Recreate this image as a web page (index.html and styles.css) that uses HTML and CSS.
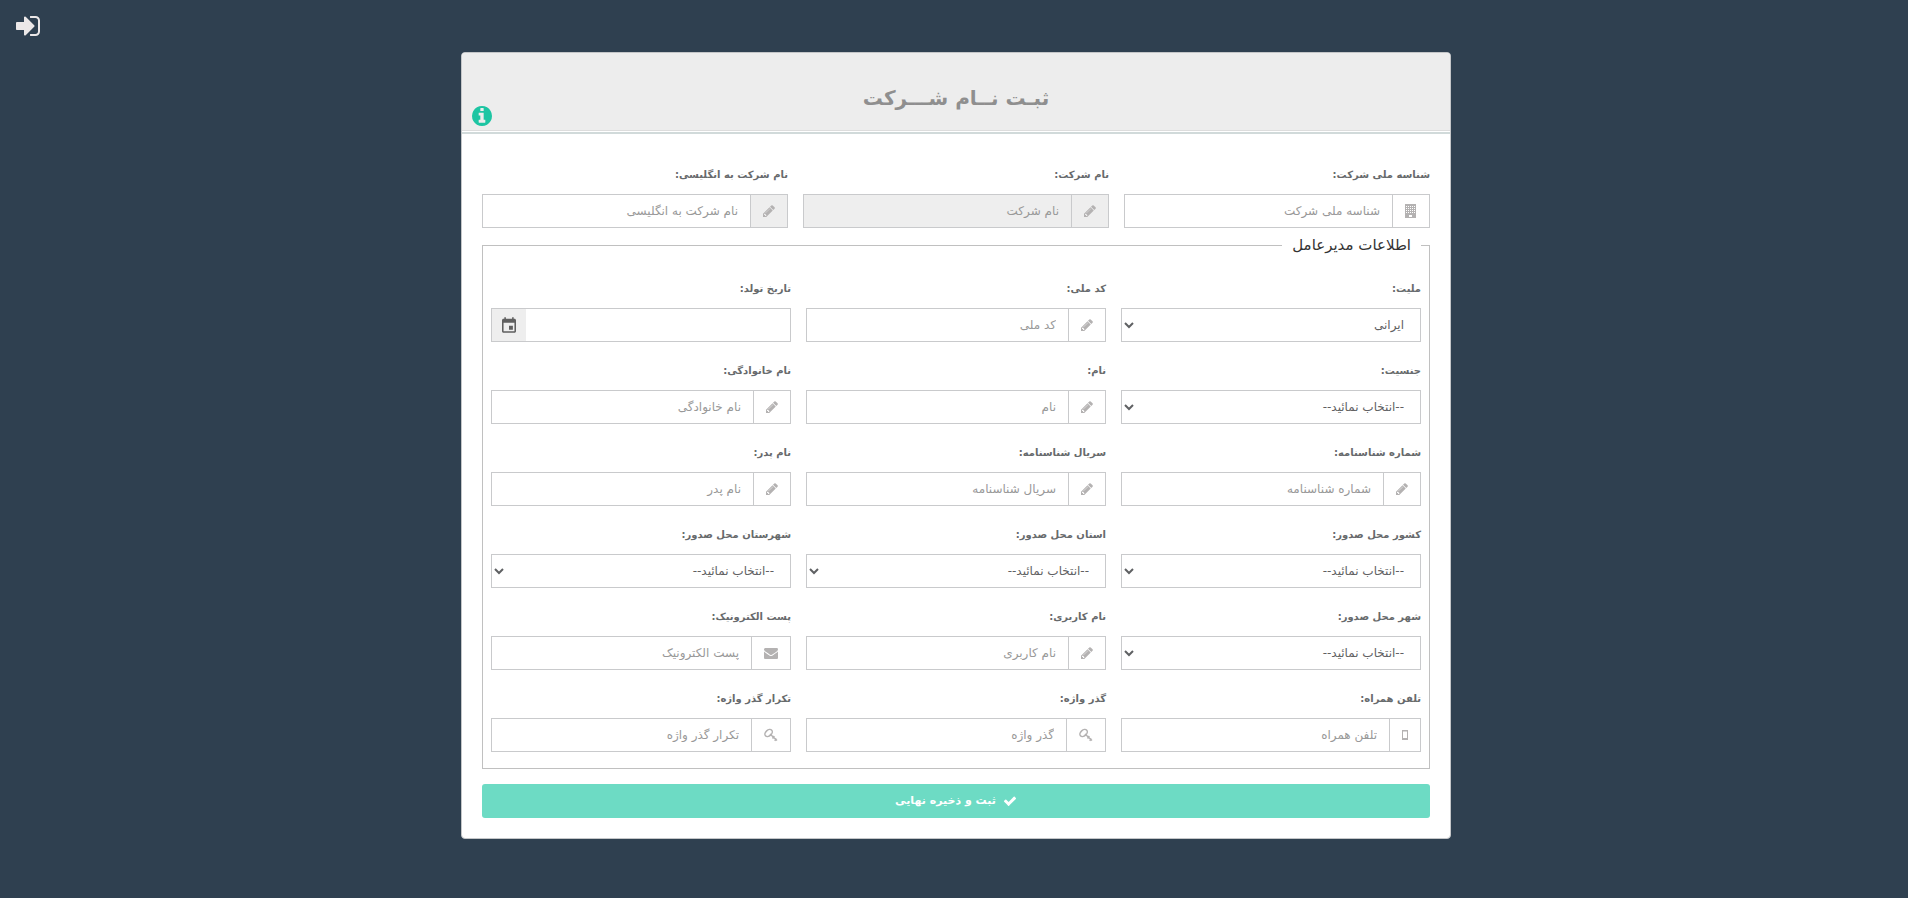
FILE: index.html
```
<!DOCTYPE html>
<html lang="fa" dir="rtl">
<head>
<meta charset="utf-8">
<title>ثبت نام شرکت</title>
<link rel="stylesheet" href="styles.css">
</head>
<body>
<svg class="sprite" aria-hidden="true">
  <symbol id="pencil" viewBox="128 128 1536 1536"><path d="M491 1536l91-91-235-235-91 91v107h128v128h107zm523-928q0-22-22-22-10 0-17 7l-542 542q-7 7-7 17 0 22 22 22 10 0 17-7l542-542q7-7 7-17zm-54-192l416 416-832 832h-416v-416zm683 96q0 53-37 90l-166 166-416-416 166-165q36-38 90-38 53 0 91 38l235 234q37 39 37 91z"/></symbol>
  <symbol id="building" viewBox="0 0 12 14"><path fill-rule="evenodd" d="M0 0h11v14H0zM1 2v1h1V2zm2 0v1h1V2zm2 0v1h1V2zm2 0v1h1V2zm2 0v1h1V2zM1 4v1h1V4zm2 0v1h1V4zm2 0v1h1V4zm2 0v1h1V4zm2 0v1h1V4zM1 6v1h1V6zm2 0v1h1V6zm2 0v1h1V6zm2 0v1h1V6zm2 0v1h1V6zM1 8v1h1V8zm2 0v1h1V8zm2 0v1h1V8zm2 0v1h1V8zm2 0v1h1V8zM4 11v2h3v-2z"/></symbol>
  <symbol id="envelope" viewBox="0 256 1792 1408"><path d="M1792 710v794q0 66-47 113t-113 47h-1472q-66 0-113-47t-47-113v-794q44 49 101 87 362 246 497 345 57 42 92.5 65.5t94.5 48 110 24.5h2q51 0 110-24.5t94.5-48 92.5-65.5q170-123 498-345 57-39 100-87zm0-294q0 79-49 151t-122 123q-376 261-468 325-10 7-42.5 31t-54 38.5-52 32.5-57.5 27-50 9h-2q-23 0-50-9t-57.5-27-52-32.5-54-38.5-42.5-31q-91-64-262-182.5t-205-142.5q-62-42-117-115.5t-55-136.5q0-78 41.5-130t118.5-52h1472q65 0 112.5 47t47.5 113z"/></symbol>
  <symbol id="key" viewBox="0 0 14 14"><g fill="none" stroke="currentColor" stroke-width="1.500"><ellipse cx="4.600" cy="5" rx="4.200" ry="2.900" transform="rotate(-42 4.600 5)"/><path d="M6 6l7 6.500M8.500 10.500L10.300 8M10.800 12.800L12.300 10.500"/></g></symbol>
  <symbol id="mobile" viewBox="0 0 6 10"><path fill-rule="evenodd" d="M0 0h6v10H0zM1 1.500v6.500h4V1.500z"/></symbol>
  <symbol id="calendar" viewBox="3 1 18 20"><path d="M17 12h-5v5h5v-5zM16 1v2H8V1H6v2H5c-1.110 0-1.990.9-1.990 2L3 19c0 1.100.89 2 2 2h14c1.100 0 2-.9 2-2V5c0-1.100-.9-2-2-2h-1V1h-2zm3 18H5V8h14v11z"/></symbol>
  <symbol id="check" viewBox="0 0 1792 1792"><path d="M1671 566q0 40-28 68l-724 724-136 136q-28 28-68 28t-68-28l-136-136-362-362q-28-28-28-68t28-68l136-136q28-28 68-28t68 28l294 295 656-657q28-28 68-28t68 28l136 136q28 28 28 68z"/></symbol>
  <symbol id="info" viewBox="128 128 1536 1536"><path d="M1152 1376v-160q0-14-9-23t-23-9h-96v-512q0-14-9-23t-23-9h-320q-14 0-23 9t-9 23v160q0 14 9 23t23 9h96v320h-96q-14 0-23 9t-9 23v160q0 14 9 23t23 9h448q14 0 23-9t9-23zm-128-896v-160q0-14-9-23t-23-9h-192q-14 0-23 9t-9 23v160q0 14 9 23t23 9h192q14 0 23-9t9-23zm640 416q0 209-103 385.500t-279.500 279.500-385.500 103-385.500-103-279.500-279.500-103-385.500 103-385.500 279.500-279.500 385.500-103 385.500 103 279.500 279.500 103 385.500z"/></symbol>
  <symbol id="signin" viewBox="128 256 1536 1280"><path d="M1312 896q0 26-19 45l-544 544q-19 19-45 19t-45-19-19-45v-288h-448q-26 0-45-19t-19-45v-384q0-26 19-45t45-19h448v-288q0-26 19-45t45-19 45 19l544 544q19 19 19 45zm352-352v704q0 119-84.500 203.500t-203.500 84.500h-320q-13 0-22.500-9.500t-9.500-22.500q0-4-1-20t-.5-26.500 3-23.500 10-19.500 20.500-6.500h320q66 0 113-47t47-113v-704q0-66-47-113t-113-47h-312l-11.500-1-11.500-3-8-5.500-7-9-2-13.500q0-4-1-20t-.5-26.500 3-23.500 10-19.500 20.500-6.500h320q119 0 203.500 84.500t84.500 203.500z"/></symbol>
</svg>

<header class="topbar">
  <a class="login-link" href="#" aria-label="ورود"><svg width="24" height="20"><use href="#signin"/></svg></a>
</header>

<main class="panel">
  <div class="panel-heading">
    <h1>ثبـت نــام شـــرکت</h1>
    <button class="info" type="button" aria-label="راهنما"><svg width="20" height="20"><use href="#info"/></svg></button>
  </div>
  <form class="panel-body">
    <div class="grid">
      <div class="field">
        <label for="cid">شناسه ملی شرکت:</label>
        <div class="group"><span class="addon"><svg width="12" height="14"><use href="#building"/></svg></span><input id="cid" type="text" placeholder="شناسه ملی شرکت"></div>
      </div>
      <div class="field">
        <label for="cname">نام شرکت:</label>
        <div class="group disabled"><span class="addon muted"><svg width="12" height="12"><use href="#pencil"/></svg></span><input id="cname" type="text" placeholder="نام شرکت" disabled></div>
      </div>
      <div class="field">
        <label for="cen">نام شرکت به انگلیسی:</label>
        <div class="group"><span class="addon muted"><svg width="12" height="12"><use href="#pencil"/></svg></span><input id="cen" type="text" placeholder="نام شرکت به انگلیسی"></div>
      </div>
    </div>

    <fieldset>
      <legend>اطلاعات مدیرعامل</legend>
      <div class="grid">
        <div class="field">
          <label for="nat">ملیت:</label>
          <select id="nat"><option>ایرانی</option></select>
        </div>
        <div class="field">
          <label for="nid">کد ملی:</label>
          <div class="group"><span class="addon"><svg width="12" height="12"><use href="#pencil"/></svg></span><input id="nid" type="text" placeholder="کد ملی"></div>
        </div>
        <div class="field">
          <label for="birth">تاریخ تولد:</label>
          <div class="group"><input id="birth" type="text"><button class="picker" type="button" aria-label="تقویم"><svg width="14" height="16"><use href="#calendar"/></svg></button></div>
        </div>

        <div class="field">
          <label for="gender">جنسیت:</label>
          <select id="gender"><option>--انتخاب نمائید--</option></select>
        </div>
        <div class="field">
          <label for="fname">نام:</label>
          <div class="group"><span class="addon"><svg width="12" height="12"><use href="#pencil"/></svg></span><input id="fname" type="text" placeholder="نام"></div>
        </div>
        <div class="field">
          <label for="lname">نام خانوادگی:</label>
          <div class="group"><span class="addon"><svg width="12" height="12"><use href="#pencil"/></svg></span><input id="lname" type="text" placeholder="نام خانوادگی"></div>
        </div>

        <div class="field">
          <label for="idno">شماره شناسنامه:</label>
          <div class="group"><span class="addon"><svg width="12" height="12"><use href="#pencil"/></svg></span><input id="idno" type="text" placeholder="شماره شناسنامه"></div>
        </div>
        <div class="field">
          <label for="idserial">سریال شناسنامه:</label>
          <div class="group"><span class="addon"><svg width="12" height="12"><use href="#pencil"/></svg></span><input id="idserial" type="text" placeholder="سریال شناسنامه"></div>
        </div>
        <div class="field">
          <label for="father">نام پدر:</label>
          <div class="group"><span class="addon"><svg width="12" height="12"><use href="#pencil"/></svg></span><input id="father" type="text" placeholder="نام پدر"></div>
        </div>

        <div class="field">
          <label for="country">کشور محل صدور:</label>
          <select id="country"><option>--انتخاب نمائید--</option></select>
        </div>
        <div class="field">
          <label for="province">استان محل صدور:</label>
          <select id="province"><option>--انتخاب نمائید--</option></select>
        </div>
        <div class="field">
          <label for="county">شهرستان محل صدور:</label>
          <select id="county"><option>--انتخاب نمائید--</option></select>
        </div>

        <div class="field">
          <label for="city">شهر محل صدور:</label>
          <select id="city"><option>--انتخاب نمائید--</option></select>
        </div>
        <div class="field">
          <label for="user">نام کاربری:</label>
          <div class="group"><span class="addon"><svg width="12" height="12"><use href="#pencil"/></svg></span><input id="user" type="text" placeholder="نام کاربری"></div>
        </div>
        <div class="field">
          <label for="email">پست الکترونیک:</label>
          <div class="group"><span class="addon"><svg width="14" height="11"><use href="#envelope"/></svg></span><input id="email" type="email" placeholder="پست الکترونیک"></div>
        </div>

        <div class="field">
          <label for="mobile-no">تلفن همراه:</label>
          <div class="group"><span class="addon phone"><svg width="6" height="10"><use href="#mobile"/></svg></span><input id="mobile-no" type="tel" placeholder="تلفن همراه"></div>
        </div>
        <div class="field">
          <label for="pass">گذر واژه:</label>
          <div class="group"><span class="addon"><svg width="14" height="14"><use href="#key"/></svg></span><input id="pass" type="password" placeholder="گذر واژه"></div>
        </div>
        <div class="field">
          <label for="pass2">تکرار گذر واژه:</label>
          <div class="group"><span class="addon"><svg width="14" height="14"><use href="#key"/></svg></span><input id="pass2" type="password" placeholder="تکرار گذر واژه"></div>
        </div>
      </div>
    </fieldset>

    <button class="submit" type="submit"><svg width="14" height="14"><use href="#check"/></svg>ثبت و ذخیره نهایی</button>
  </form>
</main>
</body>
</html>
```
FILE: styles.css
```
* { box-sizing: border-box; }

body {
  margin: 0;
  padding-left: 4px;
  background: #2f4050;
  color: #676a6c;
  font: 12px/18px "DejaVu Sans", sans-serif;
}

svg { display: block; fill: currentColor; }
.sprite { position: absolute; width: 0; height: 0; }

.topbar {
  display: flex;
  justify-content: flex-end;
  height: 52px;
  padding: 16px 12px;
}
.login-link { color: #ece8e8; }

.panel {
  max-width: 990px;
  margin: 0 auto 40px;
  border: 1px solid #c4c6c8;
  border-radius: 4px;
  background: #fff;
}

.panel-heading {
  position: relative;
  display: flex;
  align-items: center;
  justify-content: center;
  height: 78px;
  padding-top: 12px;
  border-bottom: 1px solid #ddd;
  border-radius: 3px 3px 0 0;
  background: #ededed;
}
.panel-heading h1 {
  margin: 0;
  color: #8f8f8f;
  font-size: 20px;
  line-height: 32px;
}
.info {
  position: absolute;
  left: 10px;
  bottom: 4px;
  padding: 0;
  border: 0;
  background: none;
  color: #1dc5a3;
}

.panel-body {
  margin-top: 1px;
  padding: 32px 20px 20px;
  border-top: 2px solid #d1dada;
}

.grid {
  display: grid;
  grid-template-columns: repeat(3, minmax(0, 1fr));
  gap: 20px 15px;
}
.field {
  display: flex;
  flex-direction: column;
  gap: 10px;
}
.field label {
  align-self: flex-start;
  font-size: 10px;
  font-weight: bold;
}

.group {
  display: flex;
  height: 34px;
  border: 1px solid #c9cacc;
  background: #fff;
}
.group.disabled, .addon.muted, .picker { background: #eee; }
.addon {
  display: flex;
  align-items: center;
  padding: 0 12px;
  border-left: 1px solid #c9cacc;
  color: #b4b2b2;
}
.group input {
  flex: 1;
  min-width: 0;
  padding: 0 12px;
  border: 0;
  background: none;
  color: inherit;
  font: inherit;
  text-align: right;
}
.group input::placeholder { color: #999; opacity: 1; }
.picker {
  display: flex;
  align-items: center;
  justify-content: center;
  width: 34px;
  padding: 0;
  border: 0;
  color: #5f5f5f;
}

select {
  height: 34px;
  padding: 6px 12px;
  border: 1px solid #c9cacc;
  border-radius: 0;
  background: #fff;
  color: #5f6163;
  font-family: inherit;
  font-size: 12px;
}

fieldset {
  min-width: 0;
  margin: 6px 0 15px;
  padding: 24px 8px 16px;
  border: 1px solid #c0c0c0;
}
legend {
  padding: 0 10px;
  color: #333;
  font-size: 15px;
  line-height: 22px;
}

.submit {
  display: flex;
  align-items: center;
  justify-content: center;
  gap: 7px;
  width: 100%;
  height: 34px;
  border: 0;
  border-radius: 3px;
  background: #6ddbc4;
  color: #fff;
  font: bold 11px/18px "DejaVu Sans", sans-serif;
}
```
